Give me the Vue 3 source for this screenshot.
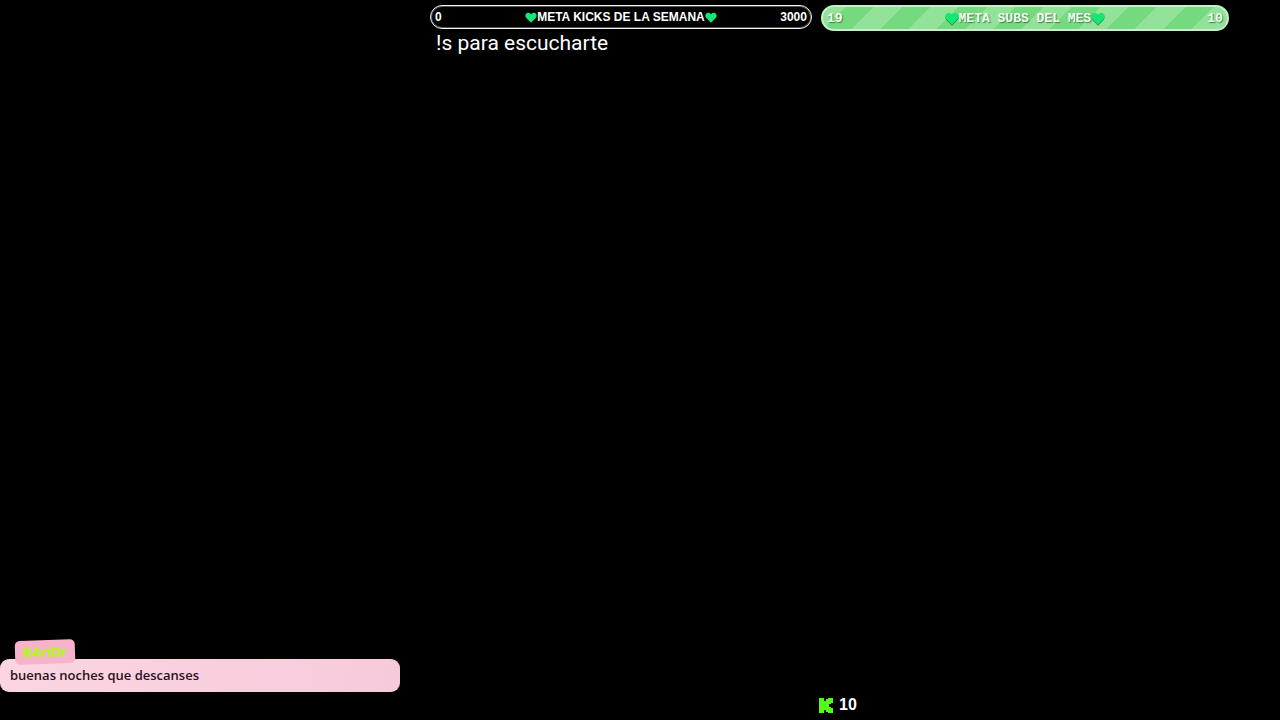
<script setup>
const heart = 'M8 14.6 1.6 8.2C-.4 6.100.1 2.400 2.600 1.400 4.700.500 6.900 1.200 8 3.200 9.100 1.200 11.300.500 13.400 1.400 15.900 2.400 16.400 6.100 14.400 8.200Z'
</script>

<template>
  <main class="overlay">
    <header class="goals">
      <div class="goal-column">
        <section class="goal kicks">
          <span class="amount">0</span>
          <h2 class="title">
            <svg class="heart" viewBox="0 0 16 15" aria-hidden="true"><path :d="heart" /></svg>
            <span>META KICKS DE LA SEMANA</span>
            <svg class="heart" viewBox="0 0 16 15" aria-hidden="true"><path :d="heart" /></svg>
          </h2>
          <span class="amount end">3000</span>
        </section>
        <p class="hint">!s para escucharte</p>
      </div>
      <section class="goal subs">
        <span class="amount">19</span>
        <h2 class="title">
          <svg class="heart" viewBox="0 0 16 15" aria-hidden="true"><path :d="heart" /></svg>
          <span>META SUBS DEL MES</span>
          <svg class="heart" viewBox="0 0 16 15" aria-hidden="true"><path :d="heart" /></svg>
        </h2>
        <span class="amount end">10</span>
      </section>
    </header>
    <footer class="bottom">
      <article class="chat">
        <span class="user">R4rt0r</span>
        <p class="message">buenas noches que descanses</p>
      </article>
      <div class="kicks-count">
        <svg class="kick" viewBox="0 0 14 15" aria-hidden="true">
          <path d="M0 0H5V3H7V1H9V0H14V5H12V6H10V9H12V10H14V15H9V14H7V12H5V15H0Z" />
        </svg>
        <span>10</span>
      </div>
    </footer>
  </main>
</template>

<style>
body {
  margin: 0;
  background: #000;
}
</style>

<style scoped>
.overlay {
  box-sizing: border-box;
  display: flex;
  flex-direction: column;
  justify-content: space-between;
  min-height: 100vh;
  background: #000;
  color: #fff;
  font-family: "Liberation Sans", sans-serif;
}
.goals {
  display: grid;
  grid-template-columns: 382fr 408fr;
  align-items: start;
  column-gap: 9px;
  padding: 5px 4% 0 430px;
}
.goal {
  box-sizing: border-box;
  display: grid;
  grid-template-columns: 1fr auto 1fr;
  align-items: center;
  font-weight: 700;
}
.kicks {
  height: 24px;
  padding: 0 4px;
  border: 1px solid #f4f4f4;
  border-radius: 12px;
  box-shadow: inset 0 0 0 1px #555;
  font-size: 12px;
}
.title {
  display: flex;
  align-items: center;
  margin: 0;
  font-size: inherit;
  white-space: nowrap;
}
.heart {
  width: 12px;
  height: 11px;
  fill: #14e873;
}
.end {
  text-align: right;
}
.hint {
  margin: 0;
  padding: 0 6px;
  font: 21px/28px Roboto, sans-serif;
}
.subs {
  height: 26px;
  padding: 1px 4px 0;
  border: 2px solid #c5f0ca;
  border-radius: 13px;
  background: repeating-linear-gradient(135deg, #92e29a 0 16px, #75d980 16px 36px, #92e29a 36px 40px);
  color: #f4fff4;
  font-family: "Liberation Mono", monospace;
  font-size: 13px;
  text-shadow: 1px 1px 1px #3d8548;
}
.subs .heart {
  width: 14px;
  height: 13px;
  filter: drop-shadow(0 1px 0 #238b4c);
}
.bottom {
  display: grid;
  grid-template-columns: 400fr 880fr;
  align-items: end;
}
.chat {
  margin-bottom: 28px;
}
.user {
  position: relative;
  display: block;
  width: max-content;
  margin: 0 0 -5px 15px;
  padding: 0 8px;
  border-radius: 5px;
  background: #f6b3ca;
  color: #b8f32a;
  font: 900 13px/24px Inter, sans-serif;
  transform: rotate(-2deg);
}
.message {
  margin: 0;
  padding: 0 10px;
  border-radius: 9px;
  background: linear-gradient(100deg, #fbd5e2, #f7cadb);
  color: #2b1020;
  font: 600 13px/33px "Open Sans", sans-serif;
}
.kicks-count {
  display: flex;
  align-items: center;
  justify-content: center;
  gap: 6px;
  padding: 0 4px 6px 0;
  font-size: 16px;
  font-weight: 700;
  line-height: 18px;
}
.kick {
  width: 14px;
  height: 15px;
  fill: #53fc18;
}
</style>
